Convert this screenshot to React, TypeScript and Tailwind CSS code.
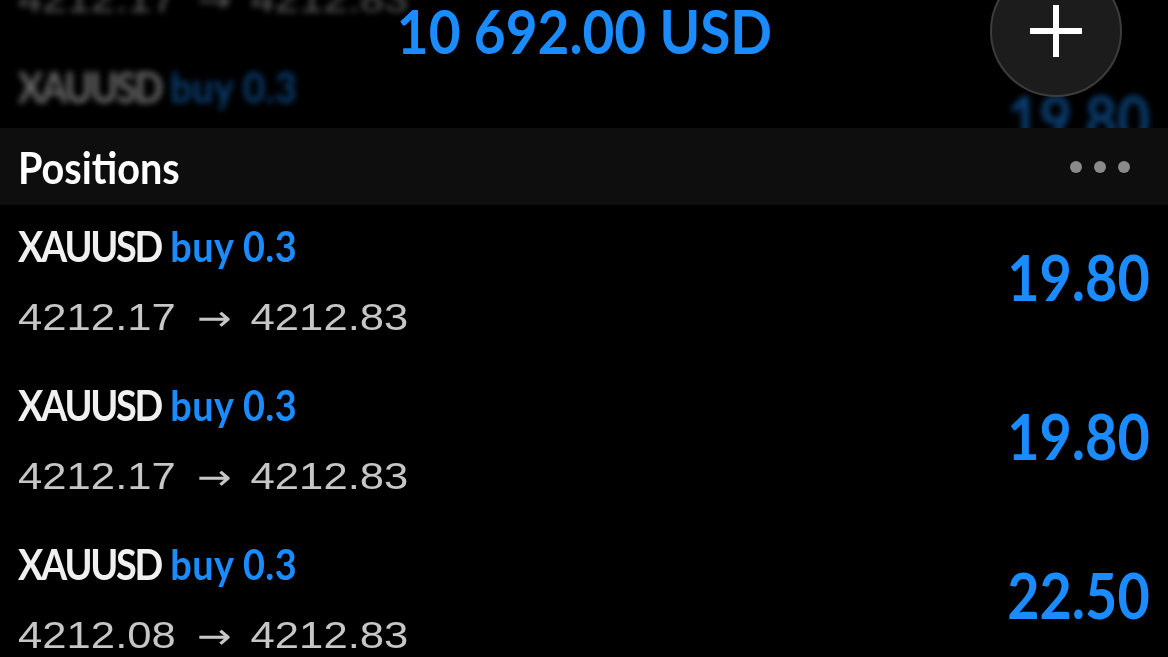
import React from "react";

const cond = "font-['Lato',sans-serif] font-bold";

type Position = {
  symbol: string;
  side: string;
  open: string;
  current: string;
  profit: string;
};

const positions: Position[] = [
  { symbol: "XAUUSD", side: "buy 0.3", open: "4212.17", current: "4212.83", profit: "19.80" },
  { symbol: "XAUUSD", side: "buy 0.3", open: "4212.17", current: "4212.83", profit: "19.80" },
  { symbol: "XAUUSD", side: "buy 0.3", open: "4212.08", current: "4212.83", profit: "22.50" },
];

function PositionRow({ p }: { p: Position }) {
  return (
    <div className="flex h-[159px] items-start justify-between pl-[18px] pr-[18px] pt-[16px]">
      <div className="flex flex-col items-start">
        <div className={`${cond} inline-block origin-left scale-x-[0.9] whitespace-nowrap text-[42px] leading-[50px]`}>
          <span className="tracking-[-2.5px] text-[#f0f0f0]">{p.symbol}</span>{" "}
          <span className="tracking-[0.5px] text-[#1a8cff]">{p.side}</span>
        </div>
        <div className="mt-[22px] inline-block origin-left scale-x-[1.18] whitespace-nowrap font-['Liberation_Sans',sans-serif] text-[37px] leading-[50px] text-[#c6c6c6]">
          {p.open}
          <span className="ml-[18px] mr-[16px] font-['DejaVu_Sans',sans-serif] text-[35px]">→</span>
          {p.current}
        </div>
      </div>
      <div className={`${cond} mt-[21px] origin-right scale-x-[0.87] text-[64px] leading-[70px] text-[#1a8cff]`}>
        {p.profit}
      </div>
    </div>
  );
}

export default function App() {
  return (
    <div className="relative h-[657px] w-[1168px] overflow-hidden bg-black">
      {/* list scrolled under the balance header */}
      <div className="relative h-[128px] overflow-hidden">
        <div className="-mt-[113px] opacity-45 blur-[3px]">
          {positions.slice(0, 2).map((p, i) => (
            <PositionRow key={i} p={p} />
          ))}
        </div>
        <div className="absolute left-0 right-0 top-[-4px] flex justify-center">
          <div className={`${cond} scale-x-[0.9] whitespace-nowrap text-[61px] leading-[70px] text-[#1a8cff]`}>
            10 692.00 USD
          </div>
        </div>
        <button className="absolute left-[990px] top-[-35px] flex h-[132px] w-[132px] items-center justify-center rounded-full border-2 border-[#3d3d3d] bg-[#1c1c1c]">
          <svg width="56" height="56" viewBox="0 0 56 56">
            <path d="M28 2v52M2 28h52" stroke="#fff" strokeWidth="6" />
          </svg>
        </button>
      </div>

      {/* section header */}
      <div className="flex h-[77px] items-center justify-between bg-[#0e0e0e] pl-[18px] pr-[38px]">
        <span className={`${cond} inline-block origin-left scale-x-[0.9] text-[44px] text-white`}>Positions</span>
        <div className="flex gap-[12px]">
          <span className="h-[12px] w-[12px] rounded-full bg-[#8a8a8a]" />
          <span className="h-[12px] w-[12px] rounded-full bg-[#8a8a8a]" />
          <span className="h-[12px] w-[12px] rounded-full bg-[#8a8a8a]" />
        </div>
      </div>

      {positions.map((p, i) => (
        <PositionRow key={i} p={p} />
      ))}
    </div>
  );
}
